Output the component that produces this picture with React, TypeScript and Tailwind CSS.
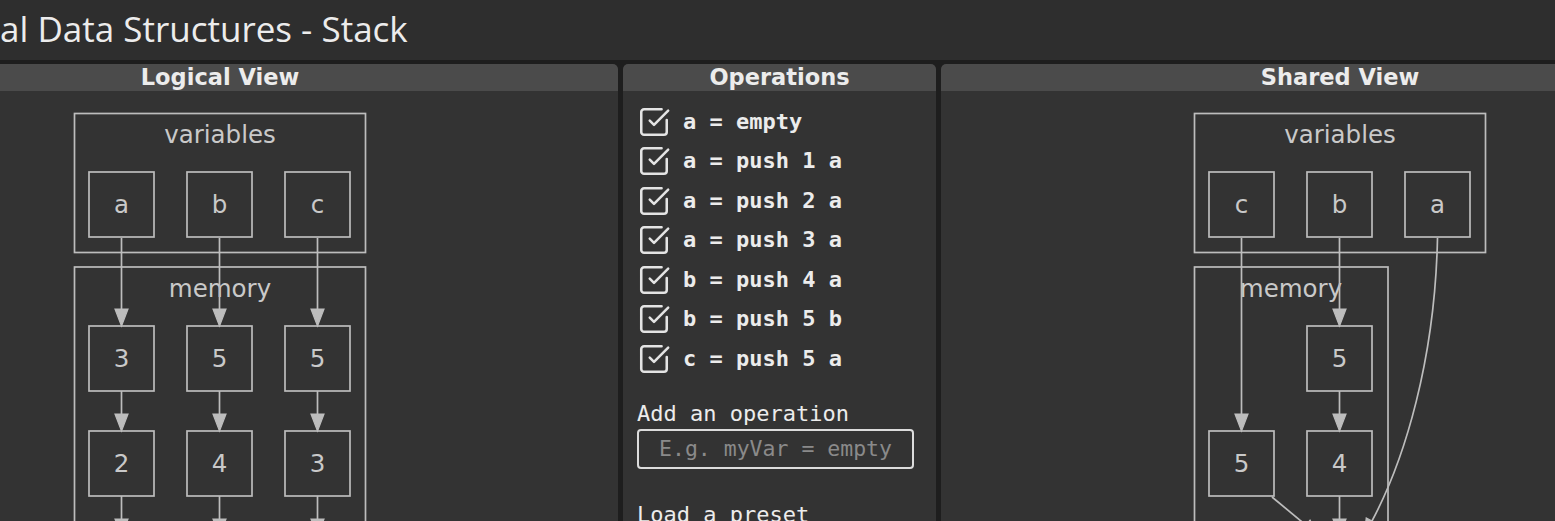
const STROKE = "#bdbdbd";
const INK = "#c9c9c9";

const ops = [
  "a = empty",
  "a = push 1 a",
  "a = push 2 a",
  "a = push 3 a",
  "b = push 4 a",
  "b = push 5 b",
  "c = push 5 a",
];

const COLS = [19, 117, 215];
const NODE = 65;

function Box({ x, y, label }: { x: number; y: number; label: string }) {
  return (
    <g>
      <rect x={x} y={y} width={NODE} height={NODE} fill="none" stroke={STROKE} strokeWidth={1.7} />
      <text x={x + NODE / 2} y={y + NODE / 2 + 8.5} textAnchor="middle" fontSize={24.5} fill={INK}>
        {label}
      </text>
    </g>
  );
}

function head(fx: number, fy: number, tx: number, ty: number) {
  const dx = tx - fx;
  const dy = ty - fy;
  const len = Math.hypot(dx, dy);
  const ux = dx / len;
  const uy = dy / len;
  const L = 17;
  const W = 6.5;
  const bx = tx - ux * L;
  const by = ty - uy * L;
  return {
    bx,
    by,
    pts: `${tx},${ty} ${bx - uy * W},${by + ux * W} ${bx + uy * W},${by - ux * W}`,
  };
}

function Arrow({ x1, y1, x2, y2 }: { x1: number; y1: number; x2: number; y2: number }) {
  const h = head(x1, y1, x2, y2);
  return (
    <g>
      <line x1={x1} y1={y1} x2={h.bx} y2={h.by} stroke={STROKE} strokeWidth={1.7} />
      <polygon points={h.pts} fill={STROKE} stroke={STROKE} strokeWidth={1.2} />
    </g>
  );
}

function Diagram({ children }: { children: React.ReactNode }) {
  return (
    <svg width={300} height={440} viewBox="0 0 300 440" className="mx-auto mt-[18px] block" style={{ fontFamily: "'DejaVu Sans', sans-serif" }}>
      {children}
    </svg>
  );
}

function LogicalDiagram() {
  const vals = [
    ["3", "2"],
    ["5", "4"],
    ["5", "3"],
  ];
  return (
    <Diagram>
      <rect x={4.5} y={4.5} width={291} height={139} fill="none" stroke={STROKE} strokeWidth={1.7} />
      <text x={150} y={34} textAnchor="middle" fontSize={24.5} fill={INK}>variables</text>
      <rect x={4.5} y={158} width={291} height={400} fill="none" stroke={STROKE} strokeWidth={1.7} />
      <text x={150} y={188} textAnchor="middle" fontSize={24.5} fill={INK}>memory</text>
      {["a", "b", "c"].map((v, i) => (
        <g key={v}>
          <Box x={COLS[i]} y={63} label={v} />
          <Arrow x1={COLS[i] + 32.5} y1={129} x2={COLS[i] + 32.5} y2={217} />
          <Box x={COLS[i]} y={217} label={vals[i][0]} />
          <Arrow x1={COLS[i] + 32.5} y1={282} x2={COLS[i] + 32.5} y2={322} />
          <Box x={COLS[i]} y={322} label={vals[i][1]} />
          <Arrow x1={COLS[i] + 32.5} y1={387} x2={COLS[i] + 32.5} y2={427} />
        </g>
      ))}
    </Diagram>
  );
}

function SharedDiagram() {
  const tip = { x: 174, y: 427 };
  const h = head(215, 350, tip.x, tip.y);
  return (
    <Diagram>
      <rect x={4.5} y={4.5} width={291} height={139} fill="none" stroke={STROKE} strokeWidth={1.7} />
      <text x={150} y={34} textAnchor="middle" fontSize={24.5} fill={INK}>variables</text>
      <rect x={4.5} y={158} width={193.5} height={400} fill="none" stroke={STROKE} strokeWidth={1.7} />
      <text x={101} y={188} textAnchor="middle" fontSize={24.5} fill={INK}>memory</text>
      <Box x={COLS[0]} y={63} label="c" />
      <Box x={COLS[1]} y={63} label="b" />
      <Box x={COLS[2]} y={63} label="a" />
      <Arrow x1={51.5} y1={129} x2={51.5} y2={322} />
      <Arrow x1={149.5} y1={129} x2={149.5} y2={217} />
      <Box x={COLS[1]} y={217} label="5" />
      <Arrow x1={149.5} y1={282} x2={149.5} y2={322} />
      <Box x={COLS[1]} y={322} label="4" />
      <Box x={COLS[0]} y={322} label="5" />
      <Arrow x1={149.5} y1={387} x2={149.5} y2={427} />
      <Arrow x1={82} y1={388} x2={129} y2={427} />
      <path d={`M247.5 129 C 245 250 215 350 ${h.bx} ${h.by}`} fill="none" stroke={STROKE} strokeWidth={1.7} />
      <polygon points={h.pts} fill={STROKE} stroke={STROKE} strokeWidth={1.2} />
    </Diagram>
  );
}

function CheckIcon() {
  return (
    <svg width={34} height={34} viewBox="0 0 24 24" fill="none" stroke="#e4e4e4" strokeWidth={1.8} strokeLinecap="round" strokeLinejoin="round" className="shrink-0">
      <path d="M21 10.656V19a2 2 0 0 1-2 2H5a2 2 0 0 1-2-2V5a2 2 0 0 1 2-2h12.344" />
      <path d="m9 11 3 3L22 4" />
    </svg>
  );
}

function PanelHeader({ title }: { title: string }) {
  return (
    <div className="flex h-[27px] items-center justify-center rounded-t-[5px] bg-[#4b4b4b] text-[22.5px] font-bold leading-none text-[#ececec] [font-family:'DejaVu_Sans',sans-serif]">
      {title}
    </div>
  );
}

export default function App() {
  return (
    <div className="h-[521px] w-[1555px] overflow-hidden bg-[#1e1e1e]">
      <header className="flex h-[60px] items-center bg-[#2e2e2e] pb-[1px] text-[35px] text-[#ececec] [font-family:'Open_Sans',sans-serif]">
        al Data Structures - Stack
      </header>

      <div className="flex gap-[5px] pt-[4px]">
        <section className="-ml-[178px] h-[457px] w-[796px] shrink-0 overflow-hidden rounded-t-[5px] bg-[#333333]">
          <PanelHeader title="Logical View" />
          <LogicalDiagram />
        </section>

        <section className="h-[457px] w-[313px] shrink-0 overflow-hidden rounded-t-[5px] bg-[#333333]">
          <PanelHeader title="Operations" />
          <div className="px-[14px] pt-[11px] text-[22px] text-[#ececec] [font-family:'DejaVu_Sans_Mono',monospace]">
            <ul>
              {ops.map((op) => (
                <li key={op} className="flex h-[39.5px] items-center gap-[12px]">
                  <CheckIcon />
                  <span className="font-bold leading-none">{op}</span>
                </li>
              ))}
            </ul>
            <p className="mt-[22px] leading-[26px]">Add an operation</p>
            <input
              placeholder="E.g. myVar = empty"
              className="mt-[2px] h-[40px] w-[277px] rounded-[4px] border-2 border-[#dcdcdc] bg-transparent text-center text-[21.5px] text-[#ececec] outline-none placeholder:text-[#8a8a8a]"
            />
            <p className="mt-[33px] leading-[26px]">Load a preset</p>
          </div>
        </section>

        <section className="h-[457px] w-[798px] shrink-0 overflow-hidden rounded-t-[5px] bg-[#333333]">
          <PanelHeader title="Shared View" />
          <SharedDiagram />
        </section>
      </div>
    </div>
  );
}
